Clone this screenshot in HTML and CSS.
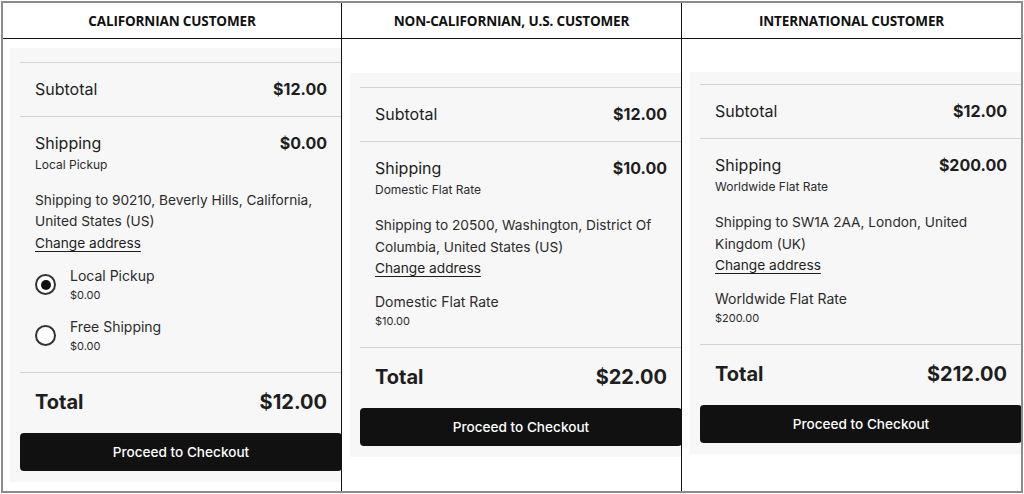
FILE: index.html
```html
<!DOCTYPE html>
<html>
<head>
<meta charset="utf-8">
<link rel="stylesheet" href="styles.css">
</head>
<body>
<div class="frame">
  <div class="grid">
    <div class="head sep">CALIFORNIAN CUSTOMER</div>
    <div class="head sep">NON-CALIFORNIAN, U.S. CUSTOMER</div>
    <div class="head">INTERNATIONAL CUSTOMER</div>

    <div class="cell sep">
      <div class="panel">
        <div class="row line">
          <span class="label">Subtotal</span><span class="amount">$12.00</span>
        </div>
        <div class="block line">
          <div class="ship-head"><span class="label">Shipping</span><span class="amount">$0.00</span></div>
          <div class="method">Local Pickup</div>
          <div class="address">Shipping to 90210, Beverly Hills, California, United States (US)<br><a class="change">Change address</a></div>
          <div class="options">
            <div class="option">
              <span class="radio on"></span>
              <div class="opt-text"><div class="opt-name">Local Pickup</div><div class="opt-price">$0.00</div></div>
            </div>
            <div class="option">
              <span class="radio"></span>
              <div class="opt-text"><div class="opt-name">Free Shipping</div><div class="opt-price">$0.00</div></div>
            </div>
          </div>
        </div>
        <div class="total line">
          <span>Total</span><span>$12.00</span>
        </div>
        <button class="btn">Proceed to Checkout</button>
      </div>
    </div>

    <div class="cell sep shifted">
      <div class="panel">
        <div class="row line">
          <span class="label">Subtotal</span><span class="amount">$12.00</span>
        </div>
        <div class="block line">
          <div class="ship-head"><span class="label">Shipping</span><span class="amount">$10.00</span></div>
          <div class="method">Domestic Flat Rate</div>
          <div class="address">Shipping to 20500, Washington, District Of Columbia, United States (US)<br><a class="change">Change address</a></div>
          <div class="options">
            <div class="option">
              <div class="opt-text"><div class="opt-name">Domestic Flat Rate</div><div class="opt-price">$10.00</div></div>
            </div>
          </div>
        </div>
        <div class="total line">
          <span>Total</span><span>$22.00</span>
        </div>
        <button class="btn">Proceed to Checkout</button>
      </div>
    </div>

    <div class="cell shifted compact">
      <div class="panel">
        <div class="row line">
          <span class="label">Subtotal</span><span class="amount">$12.00</span>
        </div>
        <div class="block line">
          <div class="ship-head"><span class="label">Shipping</span><span class="amount">$200.00</span></div>
          <div class="method">Worldwide Flat Rate</div>
          <div class="address">Shipping to SW1A 2AA, London, United Kingdom (UK)<br><a class="change">Change address</a></div>
          <div class="options">
            <div class="option">
              <div class="opt-text"><div class="opt-name">Worldwide Flat Rate</div><div class="opt-price">$200.00</div></div>
            </div>
          </div>
        </div>
        <div class="total line">
          <span>Total</span><span>$212.00</span>
        </div>
        <button class="btn">Proceed to Checkout</button>
      </div>
    </div>
  </div>
</div>
</body>
</html>
```

FILE: styles.css
```css
html, body {
  margin: 0;
  padding: 0;
  background: #ffffff;
}
body {
  width: 1024px;
  height: 494px;
  overflow: hidden;
  font-family: Inter, "Noto Sans", sans-serif;
  color: #1e1e1e;
}
.frame {
  margin: 1px 0 0 1px;
  width: 1022px;
  height: 492px;
  box-sizing: border-box;
  border: 2px solid #8c8c8c;
}
.grid {
  display: grid;
  grid-template-columns: 339px 340px 1fr;
  grid-template-rows: 36px 1fr;
  height: 100%;
}
.head {
  border-bottom: 1.5px solid #111;
  display: flex;
  align-items: center;
  justify-content: center;
  font-family: "Open Sans", "Liberation Sans", sans-serif;
  font-weight: 700;
  font-size: 13.5px;
  color: #111;
  letter-spacing: -0.15px;
}
.sep {
  border-right: 1.5px solid #111;
}
.cell {
  display: flex;
  align-items: center;
  overflow: hidden;
  padding-left: 7px;
}
.cell.shifted {
  padding-left: 8px;
}
.cell.compact {
  padding-bottom: 4px;
}
.panel {
  flex: none;
  width: 342px;
  box-sizing: border-box;
  background: #f7f7f7;
  padding: 14px 10px 11px;
}
.compact .panel {
  padding-top: 12px;
}
.line {
  border-top: 1.5px solid #d4d4d4;
}
.row {
  display: flex;
  justify-content: space-between;
  align-items: center;
  padding: 14px 15px 15px;
  font-size: 16px;
  line-height: 24px;
}
.label {
  font-weight: 400;
}
.amount {
  font-weight: 700;
}
.block {
  padding: 14px 15px 17px;
}
.ship-head {
  display: flex;
  justify-content: space-between;
  font-size: 16px;
  line-height: 24px;
}
.method {
  margin-top: 1px;
  font-size: 12px;
  line-height: 18px;
  color: #2b2b2b;
}
.address {
  margin-top: 16px;
  font-size: 13.7px;
  line-height: 21.5px;
  color: #2b2b2b;
}
.change {
  text-decoration: underline;
  text-underline-offset: 3px;
  text-decoration-thickness: 1px;
  color: #1e1e1e;
}
.options {
  margin-top: 11px;
  display: flex;
  flex-direction: column;
  gap: 12px;
}
.option {
  display: flex;
  align-items: center;
  gap: 14px;
}
.radio {
  flex: none;
  width: 21px;
  height: 21px;
  box-sizing: border-box;
  border: 2px solid #333;
  border-radius: 50%;
  position: relative;
  background: #fff;
}
.radio.on::after {
  content: "";
  position: absolute;
  left: 3.5px;
  top: 3.5px;
  width: 10px;
  height: 10px;
  border-radius: 50%;
  background: #111;
}
.opt-name {
  font-size: 14px;
  line-height: 21px;
  color: #2b2b2b;
}
.opt-price {
  font-size: 11px;
  line-height: 17px;
  margin-top: 1px;
  color: #2b2b2b;
}
.total {
  display: flex;
  justify-content: space-between;
  align-items: center;
  padding: 15px 15px 17px;
  font-size: 20px;
  line-height: 28px;
  font-weight: 700;
}
.btn {
  display: block;
  width: 100%;
  height: 38px;
  border: 0;
  border-radius: 4px;
  background: #111111;
  color: #ffffff;
  font-family: Inter, "Noto Sans", sans-serif;
  font-size: 13.6px;
  font-weight: 500;
  cursor: pointer;
}
```
